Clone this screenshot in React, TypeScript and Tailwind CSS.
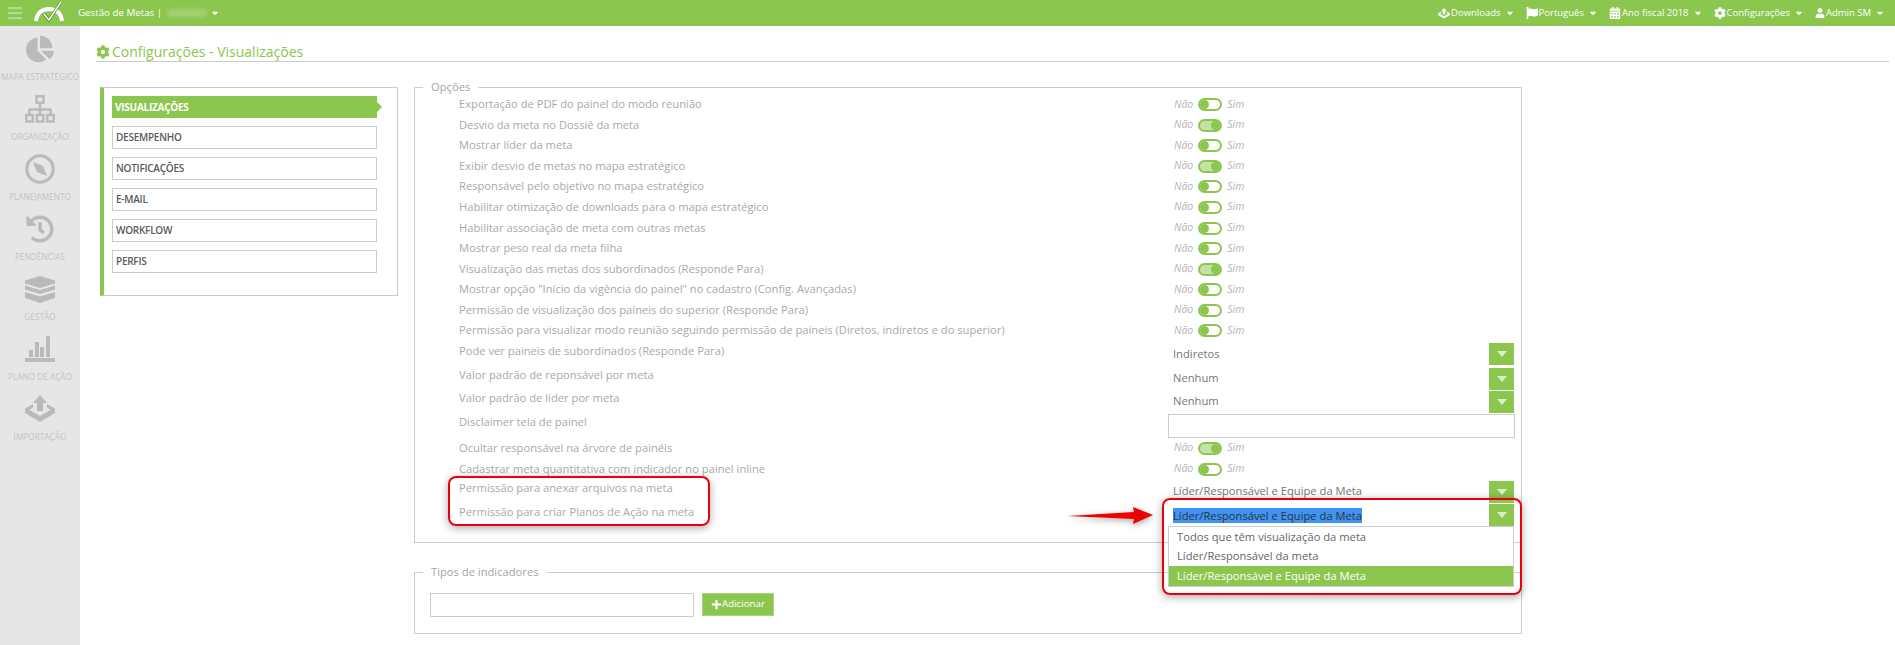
import React from "react";
import { FaBars, FaCalendarAlt, FaCaretDown, FaChartPie, FaCog, FaFlag, FaHistory, FaPlus, FaUser } from "react-icons/fa";

type Row = { label: string; kind: "off" | "on" | "select" | "input"; value?: string; h: number };

const rows: Row[] = [
  { label: "Exportação de PDF do painel do modo reunião", kind: "off", h: 20 },
  { label: "Desvio da meta no Dossiê da meta", kind: "on", h: 21 },
  { label: "Mostrar líder da meta", kind: "off", h: 20 },
  { label: "Exibir desvio de metas no mapa estratégico", kind: "on", h: 21 },
  { label: "Responsável pelo objetivo no mapa estratégico", kind: "off", h: 20 },
  { label: "Habilitar otimização de downloads para o mapa estratégico", kind: "off", h: 21 },
  { label: "Habilitar associação de meta com outras metas", kind: "off", h: 21 },
  { label: "Mostrar peso real da meta filha", kind: "off", h: 20 },
  { label: "Visualização das metas dos subordinados (Responde Para)", kind: "on", h: 21 },
  { label: 'Mostrar opção "Início da vigência do painel" no cadastro (Config. Avançadas)', kind: "off", h: 20 },
  { label: "Permissão de visualização dos paíneis do superior (Responde Para)", kind: "off", h: 21 },
  { label: "Permissão para visualizar modo reunião seguindo permissão de paíneis (Diretos, indiretos e do superior)", kind: "off", h: 20 },
  { label: "Pode ver paineis de subordinados (Responde Para)", kind: "select", value: "Indiretos", h: 27 },
  { label: "Valor padrão de reponsável por meta", kind: "select", value: "Nenhum", h: 22 },
  { label: "Valor padrão de líder por meta", kind: "select", value: "Nenhum", h: 24 },
  { label: "Disclaimer tela de painel", kind: "input", h: 24 },
  { label: "Ocultar responsável na árvore de painéis", kind: "on", h: 21 },
  { label: "Cadastrar meta quantitativa com indicador no painel inline", kind: "off", h: 21 },
  { label: "Permissão para anexar arquivos na meta", kind: "select", value: "Líder/Responsável e Equipe da Meta", h: 24 },
  { label: "Permissão para criar Planos de Ação na meta", kind: "select", value: "", h: 24 },
];

const ImportIcon = ({ width, height }: { width: number; height: number }) => (
  <svg width={width} height={height} viewBox="0 0 30 28" fill="currentColor">
    <path d="M15 0l7 8h-4v8h-6V8H8z" />
    <path d="M8 9v3.500L4.500 14.700 15 21l10.500-6.300L22 12.500V9l8 4.500v4.500L15 27 0 18v-4.500z" />
  </svg>
);

const sideItems = [
  { label: "MAPA ESTRATÉGICO", icon: <FaChartPie size={28} /> },
  {
    label: "ORGANIZAÇÃO",
    icon: (
      <svg width="30" height="28" viewBox="0 0 30 28" fill="none" stroke="currentColor" strokeWidth="2.500">
        <rect x="11.500" y="1.300" width="7" height="6.500" />
        <rect x="1.300" y="20" width="6.500" height="6.500" />
        <rect x="11.800" y="20" width="6.500" height="6.500" />
        <rect x="22.200" y="20" width="6.500" height="6.500" />
        <path d="M15 8v12M4.500 20v-5.500h21V20" />
      </svg>
    ),
  },
  {
    label: "PLANEJAMENTO",
    icon: (
      <svg width="30" height="30" viewBox="0 0 30 30" fill="none">
        <circle cx="15" cy="15" r="13.200" stroke="currentColor" strokeWidth="3" />
        <path d="M8 8 L18 12 L22 22 L12 18 Z" fill="currentColor" />
      </svg>
    ),
  },
  { label: "PENDÊNCIAS", icon: <FaHistory size={28} /> },
  {
    label: "GESTÃO",
    icon: (
      <svg width="30" height="27" viewBox="0 0 30 27" fill="currentColor">
        <path d="M15 0l15 4.500v3L15 12 0 7.500v-3z" />
        <path d="M0 9.500l15 4.500 15-4.500v4L15 18 0 13.500z" />
        <path d="M0 16l15 4.500L30 16v6l-15 5-15-5z" />
      </svg>
    ),
  },
  {
    label: "PLANO DE AÇÃO",
    icon: (
      <svg width="30" height="26" viewBox="0 0 30 26" fill="currentColor">
        <rect x="4" y="14" width="4" height="7" />
        <rect x="10" y="6" width="4" height="15" />
        <rect x="15" y="11" width="4" height="10" />
        <rect x="21" y="0" width="4" height="21" />
        <rect x="0" y="22" width="30" height="4" />
      </svg>
    ),
  },
  { label: "IMPORTAÇÃO", icon: <ImportIcon width={30} height={28} /> },
];

const menu = ["DESEMPENHO", "NOTIFICAÇÕES", "E-MAIL", "WORKFLOW", "PERFIS"];

const topItems = [
  { label: "Downloads", icon: <ImportIcon width={12} height={11} /> },
  { label: "Português", icon: <FaFlag size={12} /> },
  { label: "Ano fiscal 2018", icon: <FaCalendarAlt size={12} /> },
  { label: "Configurações", icon: <FaCog size={12} /> },
  { label: "Admin SM", icon: <FaUser size={10} /> },
];

const Toggle = ({ on }: { on: boolean }) => (
  <div className="flex items-center gap-[5px] text-[10.5px] italic text-[#b4b4b4]">
    <span>Não</span>
    <div
      className={`flex h-[13px] w-6 items-center rounded-full border-2 border-[#8bc64e] ${
        on ? "justify-end bg-[#c5e2a6]" : "justify-start bg-white"
      }`}
    >
      <div className="h-[9px] w-[9px] rounded-full bg-[#8bc64e]" />
    </div>
    <span>Sim</span>
  </div>
);

const SelectButton = () => (
  <div className="flex h-[22px] w-[25px] items-center justify-center bg-[#8bc64e]">
    <span className="border-x-[5px] border-t-[6px] border-x-transparent border-t-[#dcedc8]" />
  </div>
);

export default function App() {
  return (
    <div className="flex h-[645px] w-[1895px] flex-col overflow-hidden bg-white font-['Open_Sans',sans-serif] text-[11.2px]">
      <header className="flex h-[26px] shrink-0 items-center bg-[#8bc64e] text-[9.75px] text-white">
        <FaBars size={16} className="ml-[7px] text-[#b5dc8c]" />
        <svg width="32" height="22" viewBox="0 0 32 22" className="ml-[10px] mt-[-2px]" fill="none">
          <path d="M3 20 C4 11 10 8 16 8 C22 8 28 11 29 20" stroke="white" strokeWidth="4" />
          <path d="M11 13l5 6L28 1" stroke="#4f8f2c" strokeWidth="3" />
          <path d="M11 13l5 6L28 1" stroke="white" strokeWidth="1.500" />
        </svg>
        <span className="ml-[13px]">Gestão de Metas |</span>
        <span className="ml-[5px] h-[8px] w-[40px] rounded-sm bg-[#a3d272] blur-[2px]" />
        <FaCaretDown size={10} className="ml-[3px]" />
        <nav className="ml-auto mr-[10px] flex items-center gap-[11px] text-[9.5px]">
          {topItems.map((item) => (
            <span key={item.label} className="flex items-center gap-[1px]">
              {item.icon}
              {item.label}
              <FaCaretDown size={10} className="ml-[3px]" />
            </span>
          ))}
        </nav>
      </header>

      <div className="flex flex-1">
        <aside className="flex w-[80px] shrink-0 flex-col items-center bg-[#e6e6e6] pt-[7px] text-[#bababa]">
          {sideItems.map((item) => (
            <div key={item.label} className="flex h-[60px] w-full flex-col items-center">
              <div className="flex h-[32px] items-center">{item.icon}</div>
              <span className="mt-[6px] whitespace-nowrap text-[8.25px] text-[#c3c3c3]">{item.label}</span>
            </div>
          ))}
        </aside>

        <main className="min-w-0 flex-1 pl-4 pr-1.5">
          <h1 className="flex h-[36px] items-center gap-[2px] border-b border-[#cccccc] pt-[20px] pb-[4px] text-[14px] text-[#8bc64e]">
            <FaCog size={14} />
            Configurações - Visualizações
          </h1>

          <div className="mt-[25px] flex items-start">
            <div className="ml-1 h-[209px] w-[298px] border border-l-4 border-[#cccccc] border-l-[#8bc64e] pl-[8px] pt-[8px]">
              <div className="relative mb-2 flex h-[22px] w-[265px] items-center bg-[#8bc64e] pl-[3px] text-[10px] font-bold tracking-tight text-white">
                VISUALIZAÇÕES
                <span className="absolute left-full top-[6px] border-y-[5px] border-l-[5px] border-y-transparent border-l-[#8bc64e]" />
              </div>
              {menu.map((m) => (
                <div
                  key={m}
                  className="mb-2 flex h-[23px] w-[265px] items-center border border-[#cccccc] pl-[3px] text-[10px] font-semibold tracking-tight text-[#5a5a5a]"
                >
                  {m}
                </div>
              ))}
            </div>

            <div className="relative ml-4 mt-[-8px] flex w-[1108px] flex-col">
              <fieldset className="h-[464px] border border-[#cccccc] pl-[44px] pr-[7px]">
                <legend className="ml-[-36px] px-[8px] text-[#a5a5a5]">Opções</legend>
                <div className="mt-[-1px] flex flex-col text-[#a9a9a9]">
                  {rows.map((r) => (
                    <div key={r.label} className="flex items-center justify-between" style={{ height: r.h }}>
                      <span className={`whitespace-nowrap ${r.kind === "select" || r.kind === "input" ? "mb-[6px]" : ""}`}>
                        {r.label}
                      </span>
                      <div className="w-[346px]">
                        {(r.kind === "off" || r.kind === "on") && (
                          <div className="pl-[6px]">
                            <Toggle on={r.kind === "on"} />
                          </div>
                        )}
                        {r.kind === "select" && r.value !== "" && (
                          <div className="flex h-[22px] items-center justify-between pl-[5px] text-[#767676]">
                            <span>{r.value}</span>
                            <SelectButton />
                          </div>
                        )}
                        {r.kind === "input" && <div className="h-[24px] w-[347px] border border-[#cccccc]" />}
                      </div>
                    </div>
                  ))}
                </div>
              </fieldset>

              <fieldset className="mt-[21px] h-[70px] border border-[#cccccc] pl-[15px]">
                <legend className="ml-[-7px] px-[8px] text-[#a5a5a5]">Tipos de indicadores</legend>
                <div className="mt-[12px] flex items-start gap-2">
                  <div className="h-6 w-[264px] border border-[#cccccc]" />
                  <button className="flex h-[23px] w-[72px] items-center justify-center border border-[#a9d47c] bg-[#8bc64e] text-[9.75px] text-white">
                    <FaPlus size={11} />
                    Adicionar
                  </button>
                </div>
              </fieldset>

              {/* dropdown aberto */}
              <div className="absolute left-[754px] top-[425px] w-[346px]">
                <div className="flex h-[22px] items-center justify-between pl-[5px]">
                  <span className="bg-[#3d94f6] leading-[15px] text-[#333333]">Líder/Responsável e Equipe da Meta</span>
                  <SelectButton />
                </div>
                <div className="border border-[#cccccc] bg-white text-[#666666]">
                  <div className="flex h-[20px] items-center pl-[8px]">Todos que têm visualização da meta</div>
                  <div className="flex h-[19px] items-center pl-[8px]">Líder/Responsável da meta</div>
                  <div className="flex h-[20px] items-center bg-[#8bc64e] pl-[8px] text-white">
                    Líder/Responsável e Equipe da Meta
                  </div>
                </div>
              </div>

              {/* marcações vermelhas */}
              <div className="absolute left-[34px] top-[397px] h-[50px] w-[262px] rounded-lg border-2 border-[#e8000d] shadow-[0_2px_8px_rgba(0,0,0,0.35)]" />
              <div className="absolute left-[748px] top-[419px] h-[97px] w-[360px] rounded-lg border-2 border-[#e8000d] shadow-[0_2px_8px_rgba(0,0,0,0.35)]" />
              <svg
                className="absolute left-[653px] top-[428px] drop-shadow-[0_2px_3px_rgba(0,0,0,0.35)]"
                width="86"
                height="20"
                viewBox="0 0 86 20"
              >
                <path d="M0 9 L67 5 L66 0 L86 8 L66 17 L67 12 Z" fill="#f00000" />
              </svg>
            </div>
          </div>
        </main>
      </div>
    </div>
  );
}
